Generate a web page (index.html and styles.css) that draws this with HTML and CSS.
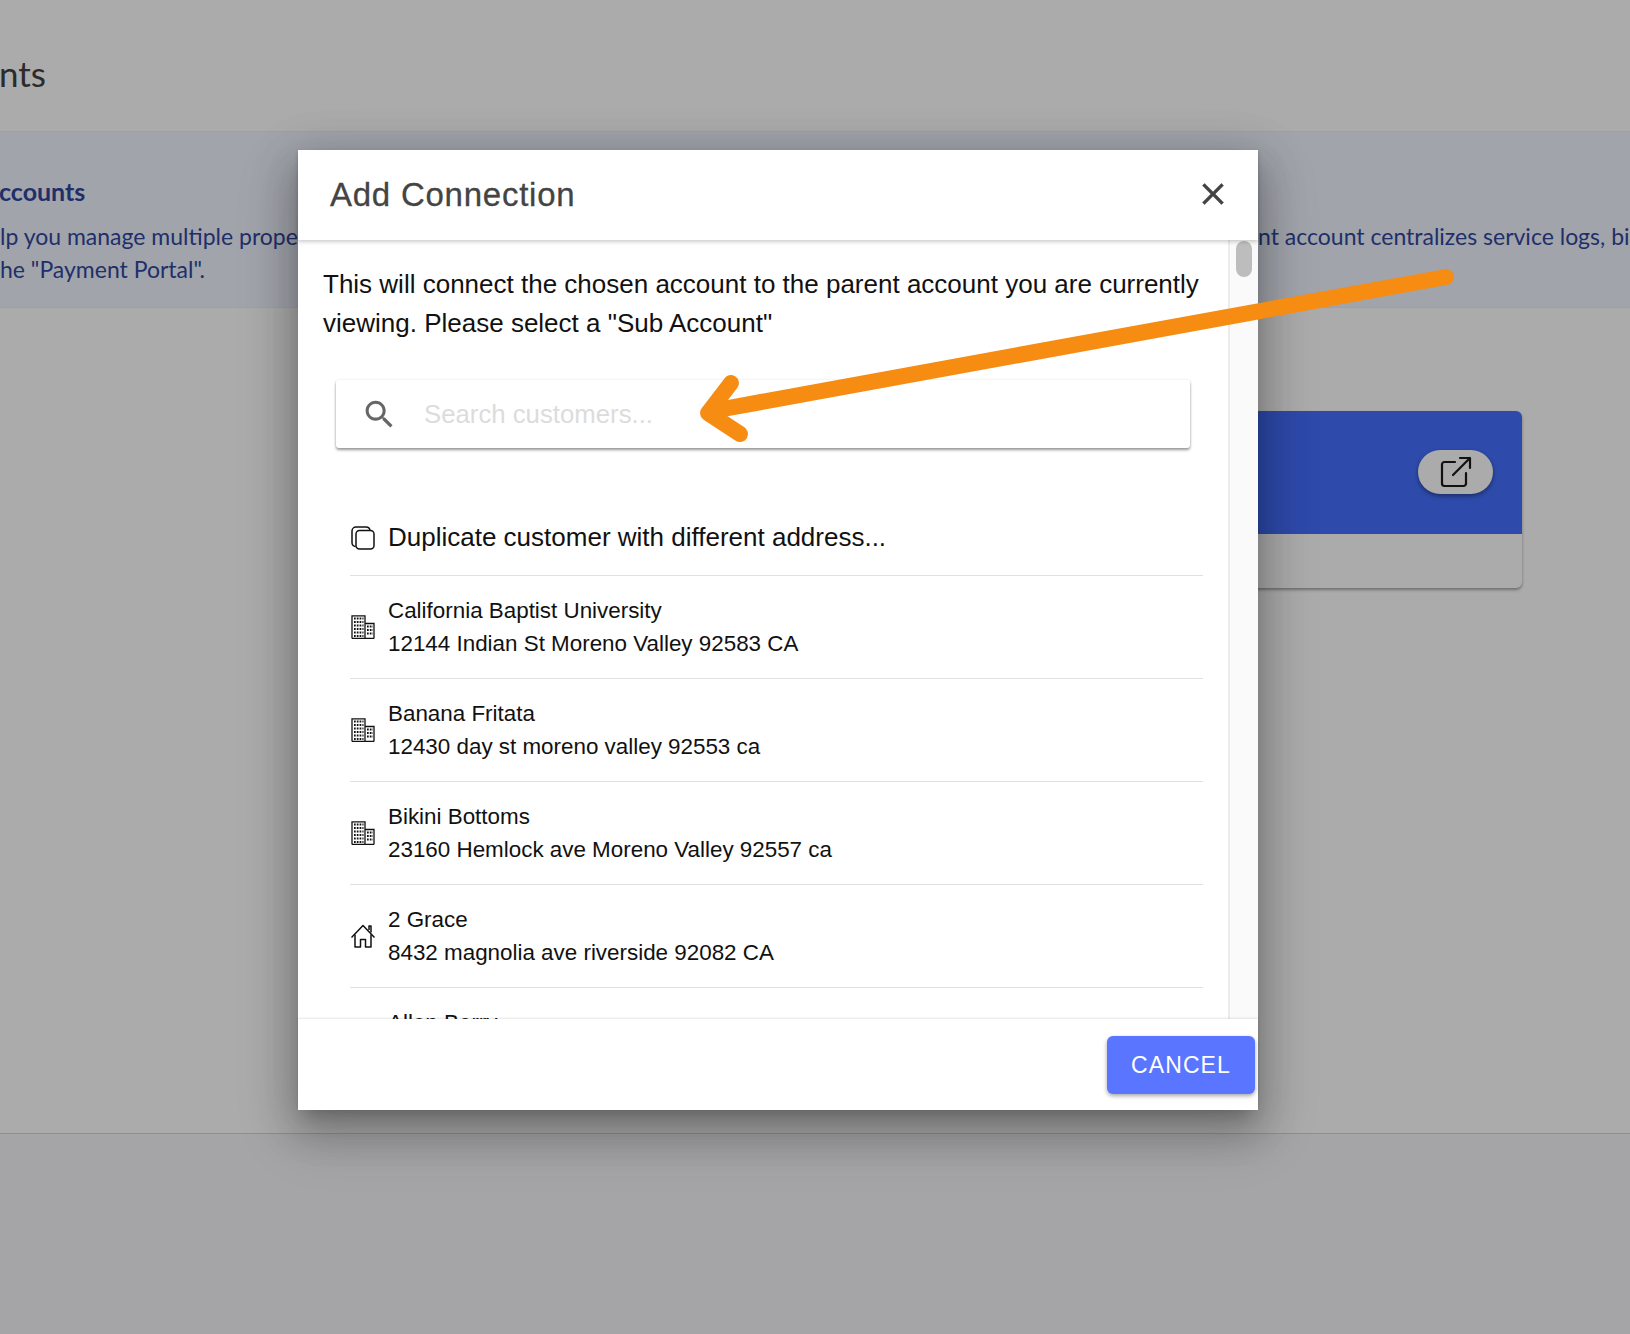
FILE: index.html
```html
<!DOCTYPE html>
<html lang="en">
<head>
<meta charset="utf-8">
<title>Add Connection</title>
<link rel="stylesheet" href="styles.css">
</head>
<body>
<div class="page">
  <header class="top"><h1 class="top-title">nts</h1></header>
  <section class="band">
    <h2 class="band-title">ccounts</h2>
    <div class="band-line"><span class="band-left">lp you manage multiple propert</span><span class="band-right">nt account centralizes service logs, billing</span></div>
    <div class="band-line"><span class="band-left">he "Payment Portal".</span></div>
  </section>
  <main class="main">
    <div class="card">
      <div class="card-head">
        <button class="pill" type="button" aria-label="Open">
          <svg class="pill-icon" viewBox="0 0 32 32" fill="none" stroke="#111" stroke-width="2.2" stroke-linecap="round" stroke-linejoin="round"><path d="M15 6H4.5A2.5 2.5 0 0 0 2 8.500V27.500A2.500 2.500 0 0 0 4.500 30H23.500A2.500 2.500 0 0 0 26 27.500V17"/><path d="M13 19L30 2M20 2H30V12"/></svg>
        </button>
      </div>
      <div class="card-foot"></div>
    </div>
  </main>
  <footer class="bottom"></footer>
</div>

<div class="modal" role="dialog">
  <div class="modal-head">
    <h2 class="modal-title">Add Connection</h2>
    <svg class="close" viewBox="0 0 24 24"><path fill="#444" stroke="#444" stroke-width=".4" d="M19 6.410L17.590 5 12 10.590 6.410 5 5 6.410 10.590 12 5 17.590 6.410 19 12 13.410 17.590 19 19 17.590 13.410 12z"/></svg>
  </div>
  <div class="modal-body">
    <div class="content">
      <p class="intro">This will connect the chosen account to the parent account you are currently viewing. Please select a "Sub Account"</p>
      <div class="search">
        <svg class="search-icon" viewBox="0 0 24 24"><path fill="#666" d="M15.500 14h-.79l-.28-.27C15.410 12.590 16 11.110 16 9.500 16 5.910 13.090 3 9.500 3S3 5.910 3 9.500 5.910 16 9.500 16c1.610 0 3.090-.59 4.230-1.570l.27.28v.79l5 4.990L20.490 19l-4.990-5zm-6 0C7.010 14 5 11.990 5 9.500S7.010 5 9.500 5 14 7.010 14 9.500 11.990 14 9.500 14z"/></svg>
        <span class="search-text">Search customers...</span>
      </div>
      <ul class="list">
        <li class="row row-dup">
          <svg class="row-icon" viewBox="0 0 24 24" fill="none" stroke="#111" stroke-width="1.500"><rect x="5" y="4.500" width="18" height="18.500" rx="3.500"/><path d="M4.500 20.500A3.800 3.800 0 0 1 1 16.500V5A4 4 0 0 1 5 1H15A4 4 0 0 1 19 4.500"/></svg>
          <span class="dup-text">Duplicate customer with different address...</span>
        </li>
        <li class="row">
          <svg class="row-icon" viewBox="0 0 24 24"><use href="#bld"/></svg>
          <div class="row-text"><div>California Baptist University</div><div>12144 Indian St Moreno Valley 92583 CA</div></div>
        </li>
        <li class="row">
          <svg class="row-icon" viewBox="0 0 24 24"><use href="#bld"/></svg>
          <div class="row-text"><div>Banana Fritata</div><div>12430 day st moreno valley 92553 ca</div></div>
        </li>
        <li class="row">
          <svg class="row-icon" viewBox="0 0 24 24"><use href="#bld"/></svg>
          <div class="row-text"><div>Bikini Bottoms</div><div>23160 Hemlock ave Moreno Valley 92557 ca</div></div>
        </li>
        <li class="row">
          <svg class="row-icon" viewBox="0 0 24 24" fill="none" stroke="#111" stroke-width="1.500" stroke-linejoin="round"><path d="M.5 13.500L12 1.500L23.500 13.500"/><path d="M4 10.500V23H9.500V15.500H14.500V23H20V10.500"/><path d="M18 6V2H20V8.500"/></svg>
          <div class="row-text"><div>2 Grace</div><div>8432 magnolia ave riverside 92082 CA</div></div>
        </li>
        <li class="row">
          <svg class="row-icon" viewBox="0 0 24 24"></svg>
          <div class="row-text"><div>Allen Berry</div><div>1 Main St</div></div>
        </li>
      </ul>
    </div>
    <div class="track"><div class="thumb"></div></div>
  </div>
  <div class="modal-foot"><button class="cancel" type="button">CANCEL</button></div>
</div>

<svg class="arrow" viewBox="0 0 1630 1334" fill="none" stroke="#f68c12" stroke-width="16" stroke-linecap="round" stroke-linejoin="round"><path d="M1446 277L712 411"/><path d="M731 383L708 413L740 434"/></svg>

<svg class="defs" width="0" height="0"><defs>
  <g id="bld" fill="none" stroke="#111" stroke-width="1.300">
    <path d="M1 23.500V.8H14V23.500M14 8.500H23V23.500M1 23.500H23"/>
    <path stroke-width="1.800" stroke-dasharray="1.700 1.100" d="M3 3.500H12.500M3 7H12.500M3 10.500H12.500M3 14H12.500M3 17.500H12.500M3 21H12.500M16 11.500H22M16 15H22M16 18.500H22"/>
  </g>
</defs></svg>
</body>
</html>
```

FILE: styles.css
```css
html, body { margin: 0; padding: 0; }
body {
  width: 1630px;
  height: 1334px;
  overflow: hidden;
  position: relative;
  background: #a5a5a7;
  font-family: "Liberation Sans", Arial, sans-serif;
}
.page { display: flex; flex-direction: column; height: 1334px; }
.top { height: 131px; border-bottom: 1px solid #99a0b0; background: #ababab; overflow: hidden; }
.top-title {
  margin: 50px 0 0 -1px;
  font: 400 35px/46px Lato, sans-serif;
  color: #2b2b2b;
  white-space: nowrap;
}
.band {
  height: 175px;
  border-bottom: 1px solid #99a0b0;
  background: #a1a4ab;
  overflow: hidden;
  color: #1f2f69;
  font-family: Lato, sans-serif;
}
.band-title { margin: 43px 0 12px -1px; font-size: 25px; line-height: 33px; font-weight: 700; white-space: nowrap; }
.band-line { display: flex; justify-content: space-between; font-size: 23px; line-height: 33px; white-space: nowrap; }
.band-left { display: block; flex: none; max-width: 298px; }
.band-right { display: block; flex: none; width: 372px; overflow: hidden; }
.main { flex: none; height: 826px; box-sizing: border-box; border-bottom: 1px solid #8f8f91; background: #ababab; padding: 103px 108px 0 0; display: flex; justify-content: flex-end; }
.card { width: 500px; height: 177px; border-radius: 6px; overflow: hidden; box-shadow: 0 2px 3px rgba(0,0,0,.35); display: flex; flex-direction: column; background: #ababab; }
.card-head { height: 123px; background: #2e4aaa; display: flex; justify-content: flex-end; padding: 39px 29px 0 0; box-sizing: border-box; }
.pill { width: 75px; height: 44px; border: 0; border-radius: 22px; background: #ababab; box-shadow: 0 2px 4px rgba(0,0,0,.4); display: flex; align-items: center; justify-content: center; padding: 0; }
.pill-icon { width: 32px; height: 32px; }
.bottom { flex: 1; background: #a5a5a7; }

.modal {
  position: absolute;
  left: 298px;
  top: 150px;
  width: 960px;
  height: 960px;
  background: #fff;
  border-radius: 3px;
  display: flex;
  flex-direction: column;
  box-shadow: 0 11px 15px -7px rgba(0,0,0,.2), 0 24px 38px 3px rgba(0,0,0,.14), 0 9px 46px 8px rgba(0,0,0,.12), 0 20px 60px 10px rgba(0,0,0,.1);
}
.modal-head {
  height: 90px;
  flex: none;
  display: flex;
  align-items: center;
  justify-content: space-between;
  padding: 0 27px 0 32px;
  box-sizing: border-box;
  position: relative;
  z-index: 2;
  background: #fff;
  box-shadow: 0 2px 4px rgba(0,0,0,.2);
}
.modal-title { margin: 0; font-size: 33px; font-weight: 400; color: #444; letter-spacing: .75px; -webkit-text-stroke: .3px #444; }
.close { width: 36px; height: 36px; margin-top: -2px; }
.modal-body { flex: 1; min-height: 0; display: flex; overflow: hidden; }
.content { flex: 1; min-width: 0; padding: 25px 0 0 25px; overflow: hidden; }
.intro { margin: 0 0 37px; width: 885px; font-size: 26px; line-height: 39px; color: #111; }
.search {
  margin-left: 13px;
  width: 854px;
  height: 68px;
  border-radius: 3px;
  background: #fff;
  box-shadow: 0 2px 3px rgba(0,0,0,.4), 0 0 3px rgba(0,0,0,.08);
  display: flex;
  align-items: center;
  padding-left: 25px;
  box-sizing: border-box;
}
.search-icon { width: 37px; height: 37px; flex: none; }
.search-text { margin-left: 26px; font-size: 25.750px; color: #dcdcdc; }
.list { list-style: none; margin: 52px 0 0 27px; padding: 0; width: 853px; }
.row { height: 103px; box-sizing: border-box; border-bottom: 1px solid #e0e0e0; display: flex; align-items: center; }
.row-dup { height: 76px; }
.row-icon { width: 24px; height: 24px; flex: none; margin: 0 13px 0 1px; }
.dup-text { font-size: 26px; color: #111; }
.row-text { font-size: 22.400px; line-height: 33px; color: #111; }
.track { width: 30px; flex: none; box-sizing: border-box; background: #fafafa; border-left: 2px solid #ececec; padding: 1px 0 0 6px; }
.thumb { width: 16px; height: 36px; border-radius: 8px; background: #bdbdbd; }
.modal-foot {
  height: 91px;
  flex: none;
  box-sizing: border-box;
  background: #fff;
  box-shadow: 0 -1px 2px rgba(0,0,0,.1);
  position: relative;
  display: flex;
  justify-content: flex-end;
  padding: 17px 3px 0 0;
}
.cancel {
  width: 148px;
  height: 58px;
  border: 0;
  border-radius: 6px;
  background: #5a75ff;
  color: #fff;
  font: 400 23px "Liberation Sans", Arial, sans-serif;
  letter-spacing: 1.100px;
  box-shadow: 0 2px 4px rgba(0,0,0,.35);
}
.arrow { position: absolute; left: 0; top: 0; width: 1630px; height: 1334px; pointer-events: none; }
.defs { position: absolute; }
```
